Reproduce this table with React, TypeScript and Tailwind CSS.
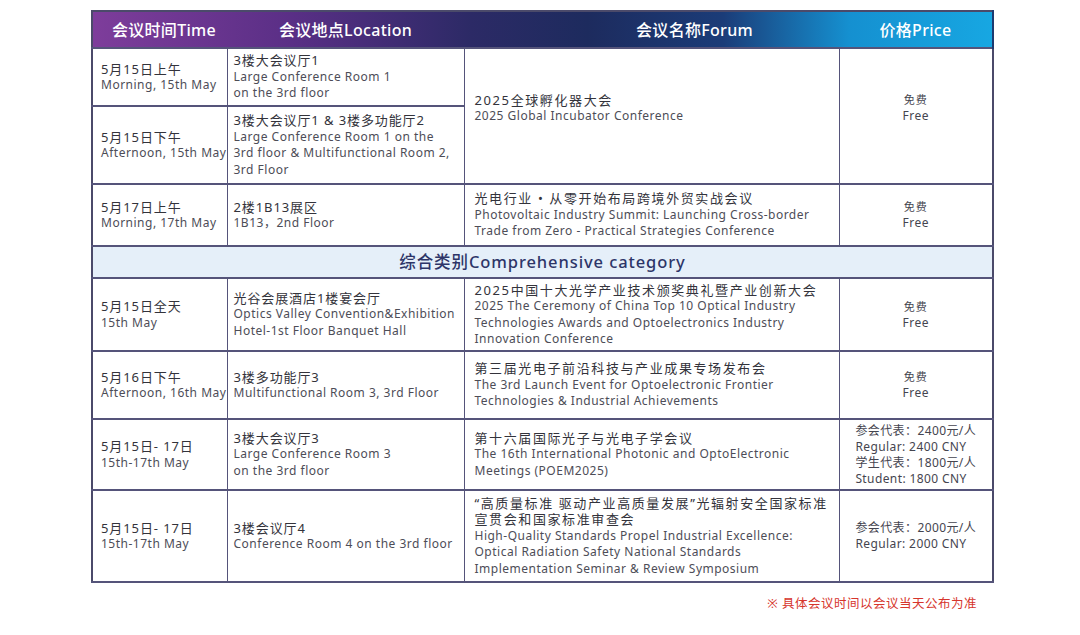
import React from 'react';

type Cell = { zh?: string[]; en: string[] };

interface Row {
  h: string;
  time?: Cell;
  place?: Cell;
  forum?: Cell & { span?: number };
  price?: { lines: string[]; free?: boolean; span?: number };
}

const rows: Row[] = [
  {
    h: 'h-[58px]',
    time: { zh: ['5月15日上午'], en: ['Morning, 15th May'] },
    place: { zh: ['3楼大会议厅1'], en: ['Large Conference Room 1', 'on the 3rd floor'] },
    forum: { zh: ['2025全球孵化器大会'], en: ['2025 Global Incubator Conference'], span: 2 },
    price: { lines: ['免费', 'Free'], free: true, span: 2 },
  },
  {
    h: 'h-[78px]',
    time: { zh: ['5月15日下午'], en: ['Afternoon, 15th May'] },
    place: {
      zh: ['3楼大会议厅1 & 3楼多功能厅2'],
      en: ['Large Conference Room 1 on the', '3rd floor & Multifunctional Room 2,', '3rd Floor'],
    },
  },
  {
    h: 'h-[62px]',
    time: { zh: ['5月17日上午'], en: ['Morning, 17th May'] },
    place: { zh: ['2楼1B13展区'], en: ['1B13，2nd Floor'] },
    forum: {
      zh: ['光电行业 • 从零开始布局跨境外贸实战会议'],
      en: ['Photovoltaic Industry Summit: Launching Cross-border', 'Trade from Zero - Practical Strategies Conference'],
    },
    price: { lines: ['免费', 'Free'], free: true },
  },
];

const rows2: Row[] = [
  {
    h: 'h-[73px]',
    time: { zh: ['5月15日全天'], en: ['15th May'] },
    place: {
      zh: ['光谷会展酒店1楼宴会厅'],
      en: ['Optics Valley Convention&Exhibition', 'Hotel-1st Floor Banquet Hall'],
    },
    forum: {
      zh: ['2025中国十大光学产业技术颁奖典礼暨产业创新大会'],
      en: [
        '2025 The Ceremony of China Top 10 Optical Industry',
        'Technologies Awards and Optoelectronics Industry',
        'Innovation Conference',
      ],
    },
    price: { lines: ['免费', 'Free'], free: true },
  },
  {
    h: 'h-[68px]',
    time: { zh: ['5月16日下午'], en: ['Afternoon, 16th May'] },
    place: { zh: ['3楼多功能厅3'], en: ['Multifunctional Room 3, 3rd Floor'] },
    forum: {
      zh: ['第三届光电子前沿科技与产业成果专场发布会'],
      en: ['The 3rd Launch Event for Optoelectronic Frontier', 'Technologies & Industrial Achievements'],
    },
    price: { lines: ['免费', 'Free'], free: true },
  },
  {
    h: 'h-[71px]',
    time: { zh: ['5月15日- 17日'], en: ['15th-17th May'] },
    place: { zh: ['3楼大会议厅3'], en: ['Large Conference Room 3', 'on the 3rd floor'] },
    forum: {
      zh: ['第十六届国际光子与光电子学会议'],
      en: ['The 16th International Photonic and OptoElectronic', 'Meetings (POEM2025)'],
    },
    price: { lines: ['参会代表：2400元/人', 'Regular: 2400 CNY', '学生代表：1800元/人', 'Student: 1800 CNY'] },
  },
  {
    h: 'h-[92px]',
    time: { zh: ['5月15日- 17日'], en: ['15th-17th May'] },
    place: { zh: ['3楼会议厅4'], en: ['Conference Room 4 on the 3rd floor'] },
    forum: {
      zh: ['“高质量标准 驱动产业高质量发展”光辐射安全国家标准', '宣贯会和国家标准审查会'],
      en: [
        'High-Quality Standards Propel Industrial Excellence:',
        'Optical Radiation Safety National Standards',
        'Implementation Seminar & Review Symposium',
      ],
    },
    price: { lines: ['参会代表：2000元/人', 'Regular: 2000 CNY'] },
  },
];

const td = 'border-x border-y-2 border-[#55547a] align-middle whitespace-nowrap';

function Text({ cell, wide }: { cell: Cell; wide?: boolean }) {
  return (
    <div className="leading-[16.5px]">
      {cell.zh?.map((z) => (
        <div
          key={z}
          className={`text-[13px] text-[#33333b] ${wide ? 'tracking-[1.6px]' : 'tracking-[0.9px]'}`}
        >
          {z}
        </div>
      ))}
      {cell.en.map((e) => (
        <div key={e} className="text-[12px] text-[#4d4d57] tracking-[0.5px]">
          {e}
        </div>
      ))}
    </div>
  );
}

function Price({ lines, free }: { lines: string[]; free?: boolean }) {
  if (free) {
    return (
      <div className="text-center leading-[16px] text-[#45454f]">
        <div className="text-[11px] tracking-[1px]">{lines[0]}</div>
        <div className="text-[12px] tracking-[0.5px]">{lines[1]}</div>
      </div>
    );
  }
  return (
    <div className="flex justify-center">
      <div className="text-left text-[12px] leading-[16px] text-[#45454f] tracking-[0.4px]">
        {lines.map((l) => (
          <div key={l}>{l}</div>
        ))}
      </div>
    </div>
  );
}

function Rows({ data }: { data: Row[] }) {
  return (
    <>
      {data.map((r, i) => (
        <tr key={i} className={r.h}>
          {r.time && (
            <td className={`${td} pl-[8px]`}>
              <Text cell={r.time} />
            </td>
          )}
          {r.place && (
            <td className={`${td} pl-[6px]`}>
              <Text cell={r.place} />
            </td>
          )}
          {r.forum && (
            <td className={`${td} pl-[10px] ${r.forum.span ? 'pb-4' : ''}`} rowSpan={r.forum.span}>
              <Text cell={r.forum} wide />
            </td>
          )}
          {r.price && (
            <td className={`${td} ${r.price.span ? 'pb-4' : ''}`} rowSpan={r.price.span}>
              <Price lines={r.price.lines} free={r.price.free} />
            </td>
          )}
        </tr>
      ))}
    </>
  );
}

export default function App() {
  return (
    <div
      className="w-[1080px] h-[635px] bg-white pt-[10px] pl-[91px]"
      style={{ fontFamily: '"Noto Sans", "Noto Sans CJK SC", sans-serif' }}
    >
      <table className="table-fixed border-collapse border-2 border-[#4b4a6a] w-[901px]">
        <colgroup>
          <col className="w-[135px]" />
          <col className="w-[237px]" />
          <col className="w-[375px]" />
          <col className="w-[154px]" />
        </colgroup>
        <thead>
          <tr className="h-[37px] bg-[linear-gradient(90deg,#7e3d9b_0%,#5a2f86_22%,#2c2a66_42%,#1d2b5e_55%,#1b3c78_70%,#1590d0_84%,#17a7e2_100%)] text-white text-[16px] tracking-[0.3px]">
            <th className="font-medium text-center pl-2">会议时间Time</th>
            <th className="font-medium text-center">会议地点Location</th>
            <th className="font-medium text-center pl-[86px]">会议名称Forum</th>
            <th className="font-medium text-center border-r-2 border-[#1d3a70]">价格Price</th>
          </tr>
        </thead>
        <tbody>
          <Rows data={rows} />
          <tr className="h-[32px] bg-[#e5eff9]">
            <td colSpan={4} className={`${td} text-center text-[16.5px] font-medium text-[#2d3568] tracking-[0.9px]`}>
              综合类别Comprehensive category
            </td>
          </tr>
          <Rows data={rows2} />
        </tbody>
      </table>
      <div className="w-[886px] text-right text-[12.5px] text-[#d6352c] mt-[12px] tracking-[0.5px]">
        ※ 具体会议时间以会议当天公布为准
      </div>
    </div>
  );
}
